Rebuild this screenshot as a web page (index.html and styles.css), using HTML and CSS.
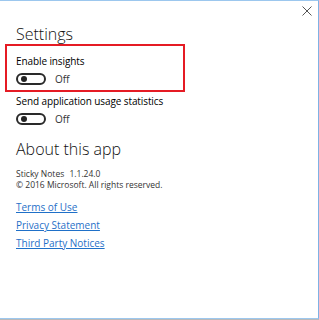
FILE: index.html
```html
<!DOCTYPE html>
<html lang="en">
<head>
    <meta charset="UTF-8">
    <meta name="viewport" content="width=device-width, initial-scale=1.0">
    <title>Sticky Notes Settings</title>
    <link rel="stylesheet" href="styles.css">
</head>
<body>
    <div class="window">
        <div class="titlebar">
            <button class="close" aria-label="Close">
                <svg width="10" height="10" viewBox="0 0 10 10">
                    <path d="M0.5 0.5 L9.5 9.5 M9.5 0.5 L0.5 9.5" stroke="#555" stroke-width="1" fill="none"/>
                </svg>
            </button>
        </div>

        <div class="content">
            <h1>Settings</h1>

            <div class="setting highlight">
                <div class="label">Enable insights</div>
                <div class="toggle-row">
                    <span class="toggle"><span class="knob"></span></span>
                    <span class="state">Off</span>
                </div>
            </div>

            <div class="setting">
                <div class="label">Send application usage statistics</div>
                <div class="toggle-row">
                    <span class="toggle"><span class="knob"></span></span>
                    <span class="state">Off</span>
                </div>
            </div>

            <h1 class="about">About this app</h1>
            <p class="info">Sticky Notes <span class="version">1.1.24.0</span></p>
            <p class="info">© 2016 Microsoft. All rights reserved.</p>

            <div class="links">
                <a href="#">Terms of Use</a>
                <a href="#">Privacy Statement</a>
                <a href="#">Third Party Notices</a>
            </div>
        </div>
    </div>
</body>
</html>
```

FILE: styles.css
```css
* {
    margin: 0;
    padding: 0;
    box-sizing: border-box;
}

body {
    background-color: #b9b9b9;
    font-family: 'Open Sans', 'Noto Sans', sans-serif;
    color: #000;
}

.window {
    width: 319px;
    height: 319px;
    background: #fff;
    border-top: 1px solid #9cc7ee;
    border-right: 1px solid #7fb2e5;
    border-bottom: 1px solid #9cc7ee;
}

.titlebar {
    height: 24px;
    display: flex;
    justify-content: flex-end;
    align-items: flex-start;
    padding: 5px 6px 0 0;
}

.close {
    width: 10px;
    height: 10px;
    border: none;
    background: none;
    display: flex;
}

.content {
    padding-left: 16px;
}

h1 {
    font-size: 16px;
    font-weight: 300;
    line-height: 19px;
    color: #111;
}

.highlight {
    margin-left: -11px;
    width: 180px;
    padding: 8px 0 4px 9px;
    border: 2px solid #e51b24;
}

.setting + .setting {
    margin-top: 2px;
}

.label {
    font-size: 10px;
    line-height: 14px;
    font-weight: 500;
    letter-spacing: -0.1px;
    white-space: nowrap;
}

.toggle-row {
    display: flex;
    align-items: center;
    margin-top: 4px;
}

.toggle {
    width: 30px;
    height: 12px;
    border: 2px solid #2a2a2a;
    border-radius: 6px;
    display: flex;
    align-items: center;
    padding-left: 3px;
}

.knob {
    width: 6px;
    height: 6px;
    border-radius: 50%;
    background: #222;
}

.state {
    margin-left: 9px;
    font-size: 10px;
    line-height: 14px;
    color: #333;
}

.about {
    margin-top: 14px;
}

.info {
    font-size: 8.5px;
    line-height: 11px;
    color: #333;
}

.version {
    margin-left: 3px;
}

.about + .info {
    margin-top: 9px;
}

.links {
    display: flex;
    flex-direction: column;
    align-items: flex-start;
    gap: 4px;
    margin-top: 10px;
}

.links a {
    font-size: 10px;
    line-height: 14px;
    color: #1f70c8;
}
```
